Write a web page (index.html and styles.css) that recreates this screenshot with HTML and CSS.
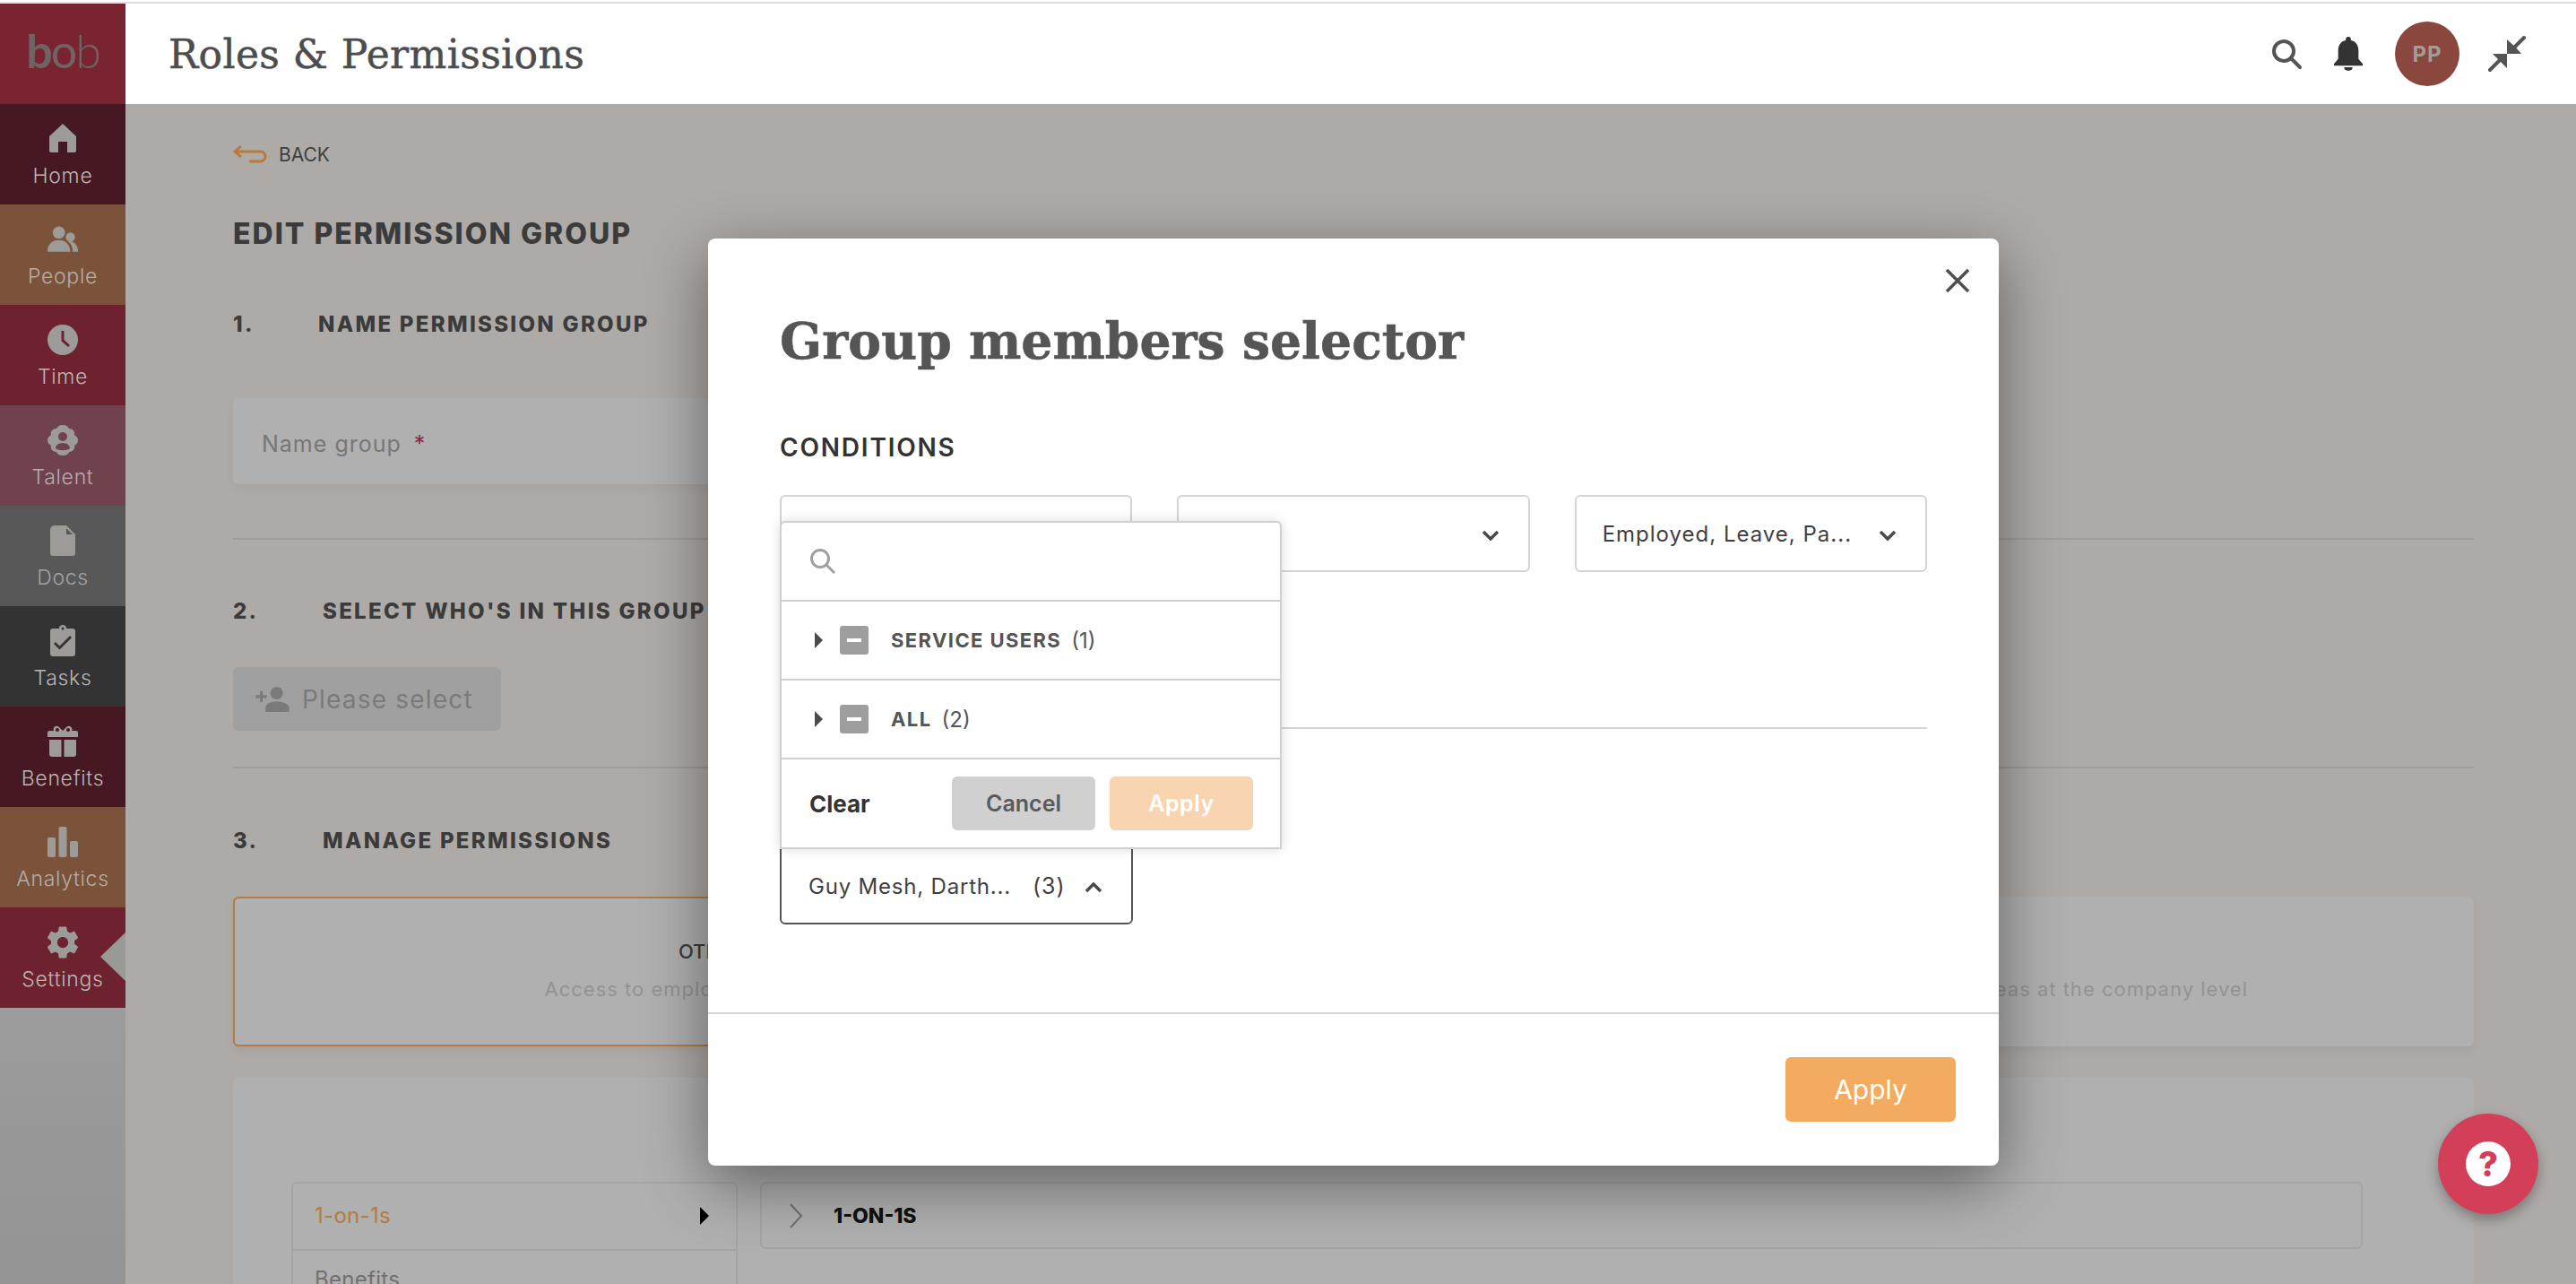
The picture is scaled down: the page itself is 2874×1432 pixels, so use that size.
FILE: index.html
```html
<!DOCTYPE html>
<html lang="en">
<head>
<meta charset="utf-8">
<title>Roles &amp; Permissions</title>
<link rel="stylesheet" href="styles.css">
</head>
<body>
<div class="app">
  <div class="topline"></div>
  <div class="shell">
    <nav class="sidebar">
      <div class="logo"><span class="l1">b</span><span class="l2">o</span><span class="l3">b</span></div>
      <a class="nav n-home"><svg class="nav-ico" viewBox="0 0 36 36"><path d="M18 1 L33 15 V31 a2 2 0 0 1-2 2 H23 V21 H13 V33 H5 a2 2 0 0 1-2-2 V15 Z"/></svg><span>Home</span></a>
      <a class="nav n-people"><svg class="nav-ico" viewBox="0 0 42 36"><circle cx="16" cy="9" r="8"/><circle cx="31" cy="15" r="6"/><path d="M1 34 C1 24 8 19 16 19 C24 19 30 24 31 34 Z"/><path d="M28 21 C35 19 41 25 41 34 H34 C34 28 32 24 28 21 Z"/></svg><span>People</span></a>
      <a class="nav n-time"><svg class="nav-ico" viewBox="0 0 36 36"><path fill-rule="evenodd" d="M18 1 a17 17 0 1 1 0 34 a17 17 0 0 1 0-34 Z M16.500 8 V19.500 L24 26 L26 24 L19.500 18 V8 Z"/></svg><span>Time</span></a>
      <a class="nav n-talent"><svg class="nav-ico" viewBox="0 0 36 36"><path fill-rule="evenodd" d="M18 1 C22 1 24 3 25 5 C29 5 32 8 31 12 C34 14 35 16 35 18 C35 21 33 23 31 24 C32 28 29 31 25 31 C24 34 21 35 18 35 C15 35 12 34 11 31 C7 31 4 28 5 24 C3 23 1 21 1 18 C1 16 2 14 5 12 C4 8 7 5 11 5 C12 3 14 1 18 1 Z M18 9 a5 5 0 1 0 0 10 a5 5 0 0 0 0-10 Z M18 21 C13 21 10 24 10 27 C13 30 23 30 26 27 C26 24 23 21 18 21 Z"/></svg><span>Talent</span></a>
      <a class="nav n-docs"><svg class="nav-ico" viewBox="0 0 36 36"><path fill-rule="evenodd" d="M9 1 H22 L32 11 V32 a3 3 0 0 1-3 3 H7 a3 3 0 0 1-3-3 V6 a5 5 0 0 1 5-5 Z M22 4 V11 H29 Z"/></svg><span>Docs</span></a>
      <a class="nav n-tasks"><svg class="nav-ico" viewBox="0 0 36 36"><path fill-rule="evenodd" d="M14 4 a4 4 0 0 1 8 0 H29 a3 3 0 0 1 3 3 V32 a3 3 0 0 1-3 3 H7 a3 3 0 0 1-3-3 V7 a3 3 0 0 1 3-3 Z M18 2.500 a1.500 1.500 0 1 0 0 3 a1.500 1.500 0 0 0 0-3 Z M10 19 L8 21 L14.500 27.500 L28 14 L26 12 L14.500 23.500 Z"/></svg><span>Tasks</span></a>
      <a class="nav n-benefits"><svg class="nav-ico" viewBox="0 0 36 36"><path fill-rule="evenodd" d="M1 8 a2 2 0 0 1 2-2 H8 C6 2 11 -1 14 2 L18 6 L22 2 C25 -1 30 2 28 6 H33 a2 2 0 0 1 2 2 V13 H1 Z M12 3 a2 2 0 1 0 0 4 a2 2 0 0 0 0-4 Z M24 3 a2 2 0 1 0 0 4 a2 2 0 0 0 0-4 Z M3 16 H16.500 V35 H6 a3 3 0 0 1-3-3 Z M19.500 16 H33 V32 a3 3 0 0 1-3 3 H19.500 Z"/></svg><span>Benefits</span></a>
      <a class="nav n-analytics"><svg class="nav-ico" viewBox="0 0 36 36"><rect x="1" y="13" width="9" height="22" rx="2"/><rect x="13.500" y="1" width="9" height="34" rx="2"/><rect x="26" y="17" width="9" height="18" rx="2"/></svg><span>Analytics</span></a>
      <a class="nav n-settings"><svg class="nav-ico" viewBox="0 0 24 24"><path d="M19.430 12.980c.04-.32.07-.64.07-.98s-.03-.66-.07-.98l2.110-1.650c.19-.15.240-.42.120-.64l-2-3.460c-.12-.22-.39-.3-.61-.22l-2.490 1c-.52-.4-1.080-.73-1.690-.98l-.38-2.650C14.460 2.180 14.250 2 14 2h-4c-.25 0-.46.18-.49.42l-.38 2.650c-.61.25-1.170.59-1.690.98l-2.490-1c-.23-.09-.49 0-.61.22l-2 3.460c-.13.22-.07.49.12.64l2.110 1.650c-.04.32-.07.65-.07.98s.03.66.07.98l-2.110 1.650c-.19.15-.24.42-.12.64l2 3.460c.12.22.39.3.61.22l2.490-1c.52.4 1.080.73 1.690.98l.38 2.650c.03.24.24.42.49.42h4c.25 0 .46-.18.49-.42l.38-2.650c.61-.25 1.170-.59 1.690-.98l2.490 1c.23.09.49 0 .61-.22l2-3.460c.12-.22.07-.49-.12-.64l-2.110-1.650zM12 15.500c-1.930 0-3.500-1.570-3.500-3.500s1.570-3.500 3.500-3.500 3.500 1.570 3.500 3.500-1.570 3.500-3.500 3.500z"/></svg><span>Settings</span><i class="nav-arrow"></i></a>
      <div class="nav-rest"></div>
    </nav>
    <div class="column">
      <header class="topbar">
        <div class="page-title">Roles &amp; Permissions</div>
        <div class="top-actions">
          <svg class="top-ico" viewBox="0 0 36 36"><circle cx="15" cy="15" r="11" class="st-search"/><path d="M23 23 L33 33" class="st-search"/></svg>
          <svg class="top-ico bell" viewBox="0 0 36 42"><path d="M18 1 a3 3 0 0 1 3 4 C27 6 30 11 30 17 V27 L35 33 V35 H1 V33 L6 27 V17 C6 11 9 6 15 5 a3 3 0 0 1 3-4 Z M13 37 H23 C23 40 21 41 18 41 C15 41 13 40 13 37 Z"/></svg>
          <div class="avatar">PP</div>
          <svg class="top-ico shrink" viewBox="0 0 42 42"><path d="M40 3 L28 15 M2 39 L14 27" class="st-shrink"/><path d="M21 5 V21 H37 L31 14 L21 5 Z M21 21 H5 L21 37 Z"/></svg>
        </div>
      </header>
      <main class="content">
        <a class="back"><svg class="back-ico" viewBox="0 0 38 20"><path d="M9 1 L2 7 L9 13 M2 7 H30 C38 7 38 18 30 18 H18"/></svg><span>BACK</span></a>
        <h1 class="edit-title">EDIT PERMISSION GROUP</h1>
        <h2 class="step step-1"><span class="step-no n1">1.</span>NAME PERMISSION GROUP</h2>
        <div class="name-field"><span>Name group</span><b>*</b></div>
        <hr class="rule rule-1">
        <h2 class="step step-2"><span class="step-no">2.</span>SELECT WHO'S IN THIS GROUP</h2>
        <div class="please"><svg class="please-ico" viewBox="0 0 24 18"><path d="M15 9 a4.500 4.500 0 1 0 0-9 a4.500 4.500 0 0 0 0 9 Z M15 10.500 C11 10.500 7 12.500 7 15 V18 H24 V15 C24 12.500 19 10.500 15 10.500 Z M5 6 V3 H3 V6 H0 V8 H3 V11 H5 V8 H8 V6 Z"/></svg><span>Please select</span></div>
        <hr class="rule rule-2">
        <h2 class="step step-3"><span class="step-no">3.</span>MANAGE PERMISSIONS</h2>
        <div class="perm-cards">
          <div class="perm-card active"><strong>OTHER PEOPLE'S DATA</strong><p>Access to employee data and also their features</p></div>
          <div class="perm-card"><strong>COMPANY</strong><p>Access to settings, features and data areas at the company level</p></div>
        </div>
        <div class="perm-panel">
          <ul class="perm-list">
            <li class="on"><span>1-on-1s</span><i></i></li>
            <li><span>Benefits</span></li>
          </ul>
          <div class="perm-detail"><svg class="detail-chev" viewBox="0 0 16 30"><path d="M2 2 L14 15 L2 28"/></svg><b>1-ON-1S</b></div>
        </div>
      </main>
    </div>
  </div>

  <div class="modal">
    <svg class="modal-close" viewBox="0 0 28 28"><path d="M2 2 L26 26 M26 2 L2 26"/></svg>
    <div class="modal-body">
      <h2 class="modal-title">Group members selector</h2>
      <h3 class="modal-label">CONDITIONS</h3>
      <div class="cond-row">
        <div class="sel"></div>
        <div class="sel"><svg class="chev" viewBox="0 0 20 12"><path d="M2 2 L10 10 L18 2"/></svg></div>
        <div class="sel"><span>Employed, Leave, Pa...</span><svg class="chev" viewBox="0 0 20 12"><path d="M2 2 L10 10 L18 2"/></svg></div>
      </div>
      <hr class="modal-rule">
      <div class="people-wrap">
        <div class="dropdown">
          <div class="dd-search"><svg class="dd-search-ico" viewBox="0 0 30 30"><circle cx="12" cy="12" r="9.500"/><path d="M19 19 L28 28"/></svg></div>
          <div class="dd-row"><i class="tri"></i><i class="check"></i><b>SERVICE USERS</b><span>(1)</span></div>
          <div class="dd-row"><i class="tri"></i><i class="check"></i><b>ALL</b><span>(2)</span></div>
          <div class="dd-foot"><b class="clear">Clear</b><span class="btn-cancel">Cancel</span><span class="btn-apply">Apply</span></div>
        </div>
        <div class="sel open"><span class="sel-text">Guy Mesh, Darth...</span><span class="sel-count">(3)</span><svg class="chev up" viewBox="0 0 20 12"><path d="M2 10 L10 2 L18 10"/></svg></div>
      </div>
    </div>
    <div class="modal-foot"><span class="modal-apply">Apply</span></div>
  </div>

  <div class="help"><div class="help-dot">?</div></div>
</div>
</body>
</html>
```
FILE: styles.css
```css
* { box-sizing: border-box; }
html, body { margin: 0; padding: 0; }
body { font-family: Inter, "Liberation Sans", sans-serif; background: #aeaaa7; color: #3a3a3a; }
.app { position: relative; width: 2874px; height: 1432px; overflow: hidden; background: #aeaaa7; }
.topline { height: 4px; background: #fff; border-top: 2px solid #fff; border-bottom: 2px solid #dedede; }
.shell { display: flex; height: 1428px; }

/* sidebar */
.sidebar { width: 140px; flex: none; display: flex; flex-direction: column; background: #989898; }
.logo { height: 112px; flex: none; background: #7a2432; display: flex; justify-content: center; align-items: center; font-family: Lato, sans-serif; font-size: 52px; line-height: 1; color: #6f6463; padding-bottom: 8px; letter-spacing: -2px; }
.logo .l1 { font-weight: 700; }
.logo .l2 { font-weight: 400; }
.logo .l3 { font-weight: 300; }
.nav { position: relative; height: 112px; flex: none; display: flex; flex-direction: column; align-items: center; padding-top: 21px; color: #b8b6b2; font-size: 23px; font-weight: 300; letter-spacing: .7px; line-height: 28px; }
.nav span { margin-top: 9px; }
.nav-ico { width: 36px; height: 36px; fill: #9d9b97; display: block; }
.n-home, .n-benefits { background: #451822; }
.n-people, .n-analytics { background: #7a533a; color: #b5aea5; }
.n-time, .n-settings { background: #6e2230; }
.n-talent { background: #70424e; color: #b6aeac; }
.n-docs { background: #585858; color: #a3a3a3; }
.n-tasks { background: #333; }
.n-settings .nav-ico { width: 42px; height: 42px; margin-top: -3px; margin-bottom: -3px; }
.nav-arrow { position: absolute; right: 0; top: 28px; width: 0; height: 0; border-style: solid; border-width: 27px 28px 27px 0; border-color: transparent #9a9a94 transparent transparent; }
.nav-rest { flex: 1; background: linear-gradient(#9c9c9c, #949494); }

/* header */
.column { flex: 1; min-width: 0; display: flex; flex-direction: column; }
.topbar { height: 112px; flex: none; background: #fff; display: flex; align-items: center; justify-content: space-between; padding: 0 56px 0 48px; }
.page-title { font-family: "DejaVu Serif", serif; font-size: 44px; color: #4d4d4d; letter-spacing: .4px; -webkit-text-stroke: .5px #4d4d4d; }
.top-actions { display: flex; align-items: center; }
.top-ico { width: 36px; height: 36px; display: block; }
.st-search { fill: none; stroke: #555; stroke-width: 4; stroke-linecap: round; }
.bell { width: 34px; height: 40px; fill: #333; margin-left: 34px; }
.avatar { width: 72px; height: 72px; border-radius: 50%; background: #8a473e; color: #a39c99; font-weight: 700; font-size: 24px; letter-spacing: 1px; display: flex; align-items: center; justify-content: center; margin-left: 35px; }
.shrink { width: 42px; height: 42px; fill: #555; margin-left: 32px; }
.st-shrink { stroke: #555; stroke-width: 4; fill: none; stroke-linecap: round; }

/* page */
.content { padding: 44px 114px 0 120px; color: #3c3c3c; }
.back { display: flex; align-items: center; height: 24px; font-size: 21px; color: #3f3f3f; }
.back-ico { width: 38px; height: 20px; fill: none; stroke: #b67b3d; stroke-width: 3; margin-right: 13px; }
.edit-title { margin: 57px 0 0; height: 40px; line-height: 40px; font-size: 32px; font-weight: 800; letter-spacing: 2px; color: #3b3b3b; }
.step { display: flex; margin: 65px 0 0; height: 30px; line-height: 30px; font-size: 24px; font-weight: 800; letter-spacing: 2.300px; color: #3b3b3b; }
.step-1 { margin-top: 66px; }
.step-no { width: 100px; flex: none; }
.step-no.n1 { width: 95px; }
.name-field { width: 1240px; height: 96px; margin-top: 67px; background: #b0b0b0; border-radius: 6px; padding: 5px 0 0 32px; display: flex; align-items: center; font-size: 25px; letter-spacing: 1px; color: #777; box-shadow: 0 6px 12px rgba(0,0,0,.04); }
.name-field b { color: #8a2a3a; margin-left: 14px; font-weight: 400; }
.rule { margin: 0; border: 0; height: 2px; background: #a09d9a; }
.rule-1 { margin-top: 60px; }
.rule-2 { margin-top: 40px; }
.please { width: 299px; height: 71px; margin-top: 47px; background: #a0a0a0; border-radius: 6px; padding-left: 25px; display: flex; align-items: center; font-size: 28px; letter-spacing: 1.200px; color: #7a7a7a; }
.please-ico { width: 38px; height: 28px; fill: #7a7a7a; margin-right: 14px; }
.step-2 { margin-top: 65px; }
.step-3 { margin-top: 66px; }
.perm-cards { display: flex; gap: 20px; margin-top: 47px; }
.perm-card { flex: 1; height: 167px; background: #b0b0b0; border-radius: 6px; text-align: center; padding-top: 46px; box-shadow: 0 6px 12px rgba(0,0,0,.05); }
.perm-card.active { border: 2px solid #b47c40; padding-top: 44px; }
.perm-card strong { display: block; font-size: 22px; font-weight: 500; line-height: 30px; color: #3c3c3c; }
.perm-card p { margin: 12px 0 0; font-size: 22px; letter-spacing: 1px; line-height: 30px; color: #939393; }
.perm-panel { display: flex; align-items: flex-start; gap: 25px; height: 400px; margin-top: 35px; background: #b0b0b0; border-radius: 6px 6px 0 0; padding: 116px 124px 0 65px; }
.perm-list { width: 498px; flex: none; margin: 0; padding: 0; list-style: none; border: 2px solid #a4a4a4; border-radius: 6px; }
.perm-list li { position: relative; height: 73px; padding: 0 0 3px 24px; display: flex; align-items: center; font-size: 24px; letter-spacing: .3px; color: #707070; }
.perm-list li + li { border-top: 2px solid #a4a4a4; padding-bottom: 8px; }
.perm-list .on { color: #b47c40; }
.perm-list i { position: absolute; right: 30px; top: 26px; width: 0; height: 0; border-style: solid; border-width: 10px 0 10px 10px; border-color: transparent transparent transparent #000; }
.perm-detail { flex: 1; height: 75px; border: 2px solid #a4a4a4; border-radius: 6px; display: flex; align-items: center; padding-left: 30px; font-size: 23px; color: #111; }
.perm-detail b { font-weight: 800; margin-left: 34px; }
.detail-chev { width: 16px; height: 30px; fill: none; stroke: #707070; stroke-width: 2; }

/* modal */
.modal { position: absolute; left: 790px; top: 266px; width: 1440px; height: 1034px; background: #fff; border-radius: 8px; display: flex; flex-direction: column; box-shadow: 0 20px 70px rgba(0,0,0,.45); }
.modal-close { position: absolute; right: 32px; top: 33px; width: 28px; height: 28px; fill: none; stroke: #4f4f4f; stroke-width: 3.500; }
.modal-body { flex: none; height: 865px; padding: 0 80px; border-bottom: 2px solid #d4d4d4; }
.modal-title { margin: 77px 0 0; height: 76px; line-height: 76px; font-family: "DejaVu Serif", serif; font-weight: 700; font-size: 55.200px; color: #555; white-space: nowrap; -webkit-text-stroke: .6px #555; }
.modal-label { margin: 65px 0 0; height: 30px; line-height: 30px; font-size: 28px; font-weight: 600; letter-spacing: 1.800px; color: #333; }
.cond-row { display: grid; grid-template-columns: repeat(3, 1fr); gap: 50px; margin-top: 38px; }
.sel { position: relative; height: 86px; border: 2px solid #d4d4d4; border-radius: 6px; display: flex; align-items: center; padding: 0 32px 0 29px; font-size: 24px; letter-spacing: 1px; color: #3f3f3f; background: #fff; white-space: nowrap; }
.chev { position: absolute; right: 32px; top: 37px; width: 20px; height: 12px; fill: none; stroke: #4a4a4a; stroke-width: 3.500; }
.modal-rule { margin: 173px 0 0; border: 0; height: 2px; background: #d4d4d4; }
.people-wrap { position: relative; width: 394px; margin-top: 132px; }
.sel.open { border-color: #555; border-radius: 0 0 6px 6px; padding-left: 30px; }
.sel-text { letter-spacing: .8px; }
.sel-count { margin-left: 24px; font-size: 25px; }
.chev.up { right: 32px; }
.dropdown { position: absolute; left: 0; bottom: 84px; width: 560px; height: 366px; z-index: 2; background: #fff; border: 2px solid #d0d0d0; border-radius: 6px 6px 0 0; box-shadow: 0 0 14px rgba(0,0,0,.14); display: flex; flex-direction: column; }
.dd-search { height: 88px; flex: none; padding: 28px 0 0 31px; border-bottom: 2px solid #d0d0d0; }
.dd-search-ico { width: 30px; height: 30px; display: block; fill: none; stroke: #a0a0a0; stroke-width: 3; }
.dd-row { height: 88px; flex: none; display: flex; align-items: center; padding-left: 37px; border-bottom: 2px solid #d0d0d0; font-size: 22px; color: #555; }
.tri { width: 0; height: 0; border-style: solid; border-width: 9px 0 9px 9px; border-color: transparent transparent transparent #4a4a4a; }
.check { position: relative; width: 32px; height: 32px; margin: 0 25px 0 19px; border-radius: 3px; background: #9e9e9e; }
.check::after { content: ""; position: absolute; left: 8px; top: 14px; width: 16px; height: 4px; background: #fff; }
.dd-row b { font-weight: 700; letter-spacing: 1.400px; }
.dd-row span { margin-left: 11px; font-size: 24px; }
.dd-foot { flex: 1; display: flex; align-items: center; padding: 0 30px 0 31px; gap: 16px; font-size: 25px; }
.clear { margin-right: auto; color: #333; font-weight: 700; font-size: 26px; }
.btn-cancel, .btn-apply { width: 160px; height: 60px; border-radius: 6px; display: flex; align-items: center; justify-content: center; font-weight: 600; }
.btn-cancel { background: #d0d0d0; color: #5a5a5a; }
.btn-apply { background: #f8d5b0; color: #fff; letter-spacing: .5px; }
.modal-foot { flex: 1; display: flex; justify-content: flex-end; padding: 48px 48px 0 0; }
.modal-apply { width: 190px; height: 72px; border-radius: 6px; background: #f2ab5f; color: #fff; font-size: 30px; font-weight: 400; display: flex; align-items: center; justify-content: center; }

/* help */
.help { position: absolute; left: 2720px; top: 1242px; width: 112px; height: 112px; border-radius: 50%; background: #d33f58; box-shadow: 0 6px 14px rgba(0,0,0,.3); display: flex; align-items: center; justify-content: center; }
.help-dot { width: 50px; height: 50px; border-radius: 50%; background: #fff; color: #d33f58; font-size: 38px; font-weight: 800; line-height: 50px; text-align: center; }
```
